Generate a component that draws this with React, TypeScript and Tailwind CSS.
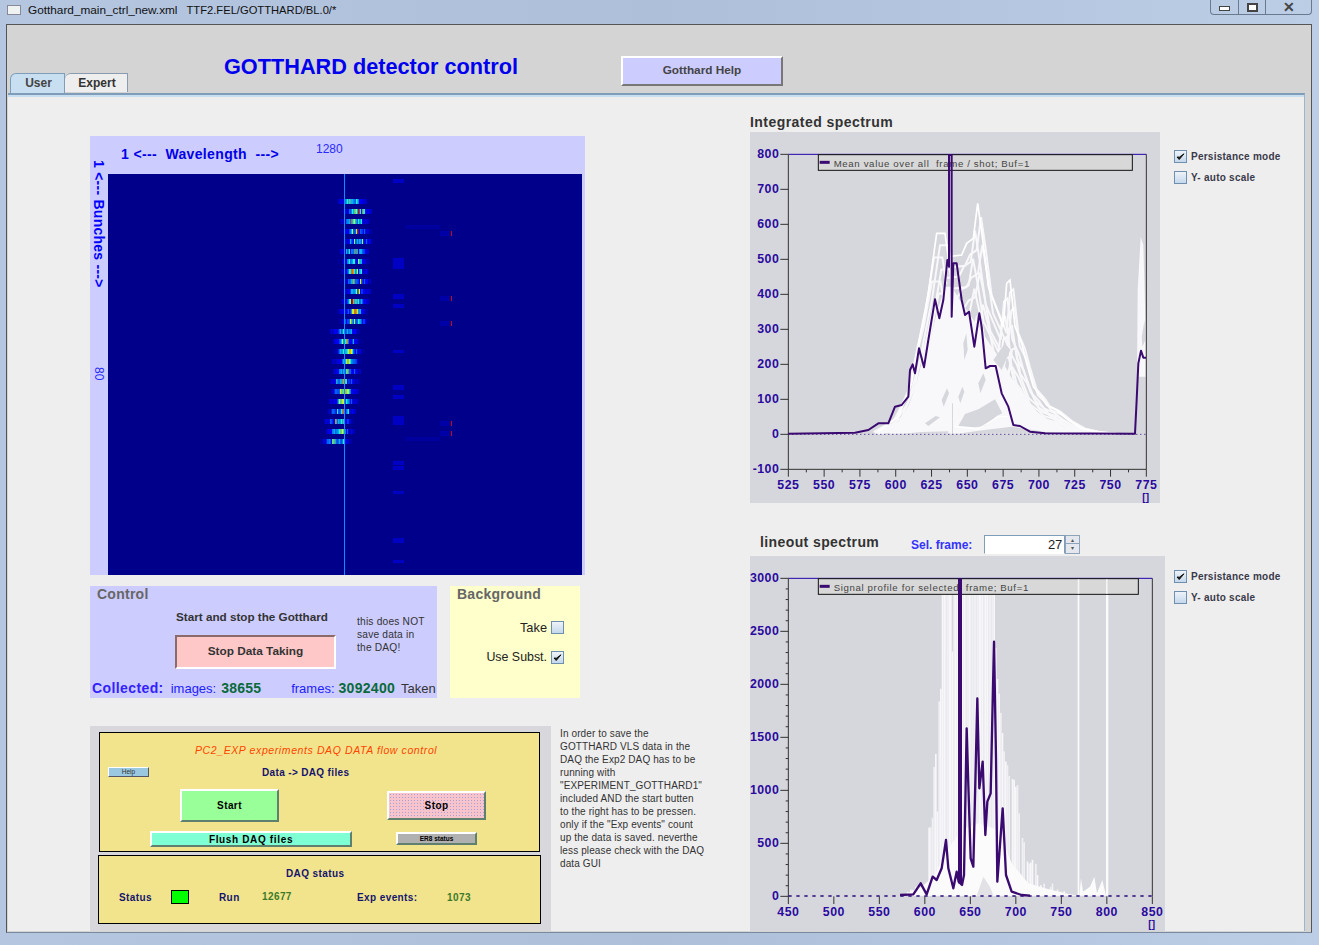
import React from "react";

const pts = (a: number[]) => a.join(" ");

// cheap seeded random so the detector image is the same every run
const makeRand = (seed: number) => () => {
  seed = (seed * 16807) % 2147483647;
  return seed / 2147483647;
};

const jet = (v: number) => {
  if (v < 0.16) return "#0000a8";
  if (v < 0.28) return "#0000d8";
  if (v < 0.42) return "#0000ff";
  if (v < 0.54) return "#0060ff";
  if (v < 0.66) return "#00b0ff";
  if (v < 0.76) return "#20f0e0";
  if (v < 0.86) return "#90ff70";
  if (v < 0.95) return "#f0f000";
  if (v < 0.99) return "#ff9000";
  return "#e80000";
};

const rowCentres = [352, 357, 354, 356, 358, 354, 354, 354, 356, 356, 354, 353, 354, 344, 346, 348, 346, 346, 343, 344, 343, 341, 338, 339, 336];

const Heatmap = () => {
  const rand = makeRand(4711);
  const cells: React.ReactNode[] = [];
  rowCentres.forEach((cx, r) => {
    const y = 199 + r * 10;
    for (let i = -24; i < 24; i++) {
      const d = i / 8;
      const v = Math.exp(-d * d) * (0.4 + rand() * 0.62);
      if (v < 0.1) continue;
      cells.push(<rect key={`${r}-${i}`} x={cx + i * 1.34 - 108} y={y - 174} width={1.4} height={5} fill={jet(v)} />);
    }
  });
  const blocks = [[179, 4], [258, 11], [294, 5], [304, 4], [350, 3], [385, 5], [395, 4], [416, 9], [461, 4], [466, 4], [491, 3], [538, 5], [560, 3]];
  const reds = [231, 296, 321, 421, 431];
  return (
    <svg width={474} height={401} className="block">
      <rect width={474} height={401} fill="#00008a" />
      {blocks.map(([y, h]) => (
        <rect key={y} x={285} y={y - 174} width={11} height={h} fill="#0000c4" />
      ))}
      <rect x={297} y={51} width={35} height={4} fill="#00009e" />
      <rect x={297} y={263} width={35} height={4} fill="#00009e" />
      {reds.map((y) => (
        <g key={y}>
          <rect x={332} y={y - 174} width={9} height={5} fill="#0000a8" />
          <rect x={343} y={y - 174} width={1} height={5} fill="#d00020" />
        </g>
      ))}
      {cells}
      <rect x={236} y={0} width={1} height={401} fill="#0a8cff" />
    </svg>
  );
};

const Checkbox = ({ checked }: { checked?: boolean }) => (
  <span className="flex h-[13px] w-[13px] shrink-0 items-center justify-center border border-[#6f8fae] bg-gradient-to-b from-[#eef3f8] to-[#c5d8ec]">
    {checked && (
      <svg width="11" height="11" viewBox="0 0 11 11">
        <path d="M2 6 L4.2 8.5 L9 2.8 L4.4 6.2 Z" fill="#111" stroke="#111" strokeWidth="1" />
      </svg>
    )}
  </span>
);

const PlotOption = ({ checked, label }: { checked?: boolean; label: string }) => (
  <div className="flex h-[21px] items-center gap-1">
    <Checkbox checked={checked} />
    <span className="text-[10px] font-bold tracking-[0.25px] text-[#3a3a4a]">{label}</span>
  </div>
);

const labelColor = "#2a0a9e";
const plotBg = "#d6d7dc";
const traceWhite = "#f8f8fa";

const envelopeA = [400, 905, 460, 860, 500, 760, 525, 620, 550, 490, 575, 310, 600, 310, 612, 400];
const envelopeB = [610, 380, 650, 375, 665, 340, 685, 325, 698, 220, 712, 320, 730, 470, 760, 550, 775, 590, 785, 460, 795, 450, 810, 590, 830, 640, 845, 700, 865, 770, 890, 800, 905, 825, 935, 840, 970, 870, 1010, 895, 1050, 905, 1100, 911];

// shrink a curve towards the baseline, this is what the persistance traces look like
const scaled = (a: number[], s: number, dx: number) => a.map((v, i) => (i % 2 === 0 ? v + dx : 912 - (912 - v) * s));

const IntegratedPlot = () => {
  const yLabels = [800, 700, 600, 500, 400, 300, 200, 100, 0, -100];
  const xLabels = [525, 550, 575, 600, 625, 650, 675, 700, 725, 750, 775];
  const traces = [
    [0.94, 10], [0.88, -8], [0.82, 14], [0.76, -14], [0.7, 6], [0.63, -10], [0.56, 16], [0.5, -4], [0.43, 8], [0.36, -8], [0.28, 4], [0.2, -2],
  ];
  return (
    <svg width={410} height={371} viewBox="15 6 1230 1113" className="block" style={{ background: plotBg }}>
      {traces.map(([s, dx]) => (
        <g key={s}>
          <polyline fill="none" stroke={traceWhite} strokeWidth="6" points={pts(scaled(envelopeA, s, dx))} />
          <polyline fill="none" stroke={traceWhite} strokeWidth="6" points={pts(scaled(envelopeB, s, dx))} />
        </g>
      ))}
      <polygon
        fill={traceWhite}
        points={pts([430, 911, 480, 860, 520, 745, 550, 650, 575, 550, 600, 470, 620, 470, 650, 520, 700, 590, 750, 665, 800, 745, 850, 815, 890, 860, 960, 892, 1040, 908, 1100, 911])}
      />
      <polygon fill={plotBg} points={pts([640, 888, 660, 852, 700, 838, 750, 808, 772, 850, 755, 858, 720, 888, 690, 892])} />
      <polygon fill={plotBg} points={pts([470, 911, 610, 911, 610, 904, 530, 906])} />
      <polygon fill={plotBg} points={pts([640, 911, 1000, 911, 900, 906, 800, 890, 700, 902])} />
      <polygon fill={plotBg} points={pts([590, 810, 606, 775, 612, 790, 596, 830])} />
      <polygon fill={plotBg} points={pts([540, 880, 572, 858, 585, 862, 550, 888])} />
      <polygon fill={plotBg} points={pts([655, 640, 664, 610, 668, 660, 658, 690])} />
      <polygon fill={plotBg} points={pts([745, 690, 780, 640, 796, 660, 770, 720])} />
      <polygon fill={plotBg} points={pts([700, 760, 715, 730, 722, 750, 706, 790])} />
      <polygon fill={plotBg} points={pts([640, 800, 652, 770, 658, 785, 646, 820])} />
      <polyline fill="none" stroke="#ffffff" strokeWidth="5" points={pts(envelopeA)} />
      <polyline fill="none" stroke="#ffffff" strokeWidth="5" points={pts(envelopeB)} />
      <polyline fill="none" stroke="#ffffff" strokeWidth="4" points={pts([630, 890, 700, 897, 760, 860, 790, 860])} />
      <rect x="621" y="820" width="3" height="92" fill={plotBg} />
      <polygon fill={traceWhite} points={pts([1176, 740, 1178, 480, 1187, 320, 1195, 345, 1201, 560, 1202, 740])} />
      <polygon fill={plotBg} points={pts([1190, 620, 1199, 570, 1201, 630, 1192, 650])} />

      <line x1="130" y1="73" x2="1204" y2="73" stroke="#2200aa" strokeWidth="3" />
      <line x1="130" y1="73" x2="130" y2="1018" stroke="#333" strokeWidth="3" />
      <line x1="1204" y1="73" x2="1204" y2="1018" stroke="#333" strokeWidth="3" />
      <line x1="130" y1="1018" x2="1204" y2="1018" stroke="#333" strokeWidth="3" />
      <line x1="130" y1="913" x2="1204" y2="913" stroke="#2a0a7e" strokeWidth="3" strokeDasharray="3 9" />
      {yLabels.map((l, i) => (
        <g key={l}>
          <line x1="106" x2="130" y1={73 + i * 105} y2={73 + i * 105} stroke="#333" strokeWidth="3" />
          <text x="103" y={73 + i * 105 + 12} textAnchor="end" fontSize="37" letterSpacing="1.5" fontWeight="700" fill={labelColor}>
            {l}
          </text>
        </g>
      ))}
      {xLabels.map((l, i) => (
        <g key={l}>
          <line x1={130 + i * 107.4} x2={130 + i * 107.4} y1="1018" y2="1040" stroke="#333" strokeWidth="3" />
          {i < 10 && <line x1={184 + i * 107.4} x2={184 + i * 107.4} y1="1018" y2="1027" stroke="#333" strokeWidth="3" />}
          <text x={130 + i * 107.4} y="1076" textAnchor="middle" fontSize="37" letterSpacing="1.5" fontWeight="700" fill={labelColor}>
            {l}
          </text>
        </g>
      ))}
      <text x="1202" y="1112" textAnchor="middle" fontSize="30" fontWeight="700" fill={labelColor}>
        []
      </text>

      <rect x="220" y="74" width="942" height="47" fill="#d8d8d8" stroke="#111" strokeWidth="3" />
      <line x1="224" y1="97" x2="254" y2="97" stroke="#3a0a70" strokeWidth="9" />
      <text x="266" y="110" fontSize="29" letterSpacing="1.9" fill="#444" style={{ whiteSpace: "pre" }}>
        Mean value over all  frame / shot; Buf=1
      </text>
      <polyline
        fill="none"
        stroke="#3a0a70"
        strokeWidth="6"
        strokeLinejoin="round"
        points={pts([130, 911, 330, 908, 370, 900, 400, 880, 430, 880, 450, 830, 470, 825, 490, 800, 495, 720, 503, 703, 510, 730, 522, 655, 537, 712, 550, 630, 570, 508, 583, 565, 595, 510, 607, 390, 612, 410, 612, 75, 620, 75, 620, 560, 625, 400, 635, 400, 650, 510, 660, 555, 672, 545, 688, 650, 703, 550, 710, 590, 722, 715, 735, 708, 752, 708, 770, 790, 790, 830, 805, 885, 825, 888, 855, 905, 900, 910, 1170, 911, 1175, 810, 1180, 700, 1188, 662, 1195, 683, 1203, 683])}
      />
    </svg>
  );
};

const lineoutEnvelope = [470, 1097, 500, 1070, 538, 1040, 545, 880, 560, 860, 565, 710, 585, 400, 590, 150, 745, 150, 752, 400, 770, 600, 790, 730, 815, 745, 825, 900, 850, 985, 868, 960, 882, 1040, 920, 1060, 960, 1085, 1000, 1097];

const envelopeAt = (x: number) => {
  for (let i = 0; i < lineoutEnvelope.length - 2; i += 2) {
    const [x0, y0, x1, y1] = lineoutEnvelope.slice(i, i + 4);
    if (x >= x0 && x <= x1) return y0 + ((y1 - y0) * (x - x0)) / (x1 - x0);
  }
  return 1097;
};

const LineoutPlot = () => {
  const yLabels = [3000, 2500, 2000, 1500, 1000, 500, 0];
  const xLabels = [450, 500, 550, 600, 650, 700, 750, 800, 850];
  const rand = makeRand(991);
  const bars: React.ReactNode[] = [];
  for (let x = 470; x < 1000; x += 5) {
    const drop = rand() < 0.18 ? rand() * 380 : rand() * 40;
    const top = Math.min(envelopeAt(x) + drop, 1097);
    bars.push(<rect key={x} x={x} y={top} width={5} height={1097 - top} fill={rand() < 0.5 ? "#f0f0f3" : "#f7f7f9"} />);
  }
  return (
    <svg width={415} height={376} viewBox="15 78 1245 1128" className="block" style={{ background: plotBg }}>
      {bars}
      <polygon
        fill="#fbfbfc"
        points={pts([470, 1097, 530, 1070, 570, 1035, 600, 970, 650, 900, 700, 880, 760, 900, 800, 1000, 850, 1060, 900, 1075, 960, 1090, 1000, 1097])}
      />
      <polygon fill="#e2e2e6" points={pts([695, 1097, 715, 1040, 735, 1070, 745, 1097])} />
      <rect x="998" y="145" width="5" height="952" fill="#fbfbfc" />
      <rect x="1083" y="145" width="7" height="952" fill="#fbfbfc" />
      <polygon fill="#fbfbfc" points={pts([1003, 1097, 1008, 1045, 1014, 1085, 1035, 1070, 1048, 1040, 1056, 1090, 1072, 1050, 1083, 1097])} />

      <line x1="130" y1="145" x2="1222" y2="145" stroke="#2200aa" strokeWidth="3" />
      <line x1="130" y1="145" x2="130" y2="1099" stroke="#333" strokeWidth="3" />
      <line x1="1222" y1="145" x2="1222" y2="1099" stroke="#333" strokeWidth="3" />
      {yLabels.map((l, i) => (
        <g key={l}>
          <line x1="106" x2="130" y1={145 + i * 159} y2={145 + i * 159} stroke="#333" strokeWidth="3" />
          {i < 6 &&
            [1, 2, 3, 4].map((k) => (
              <line key={k} x1="122" x2="130" y1={145 + i * 159 + k * 31.8} y2={145 + i * 159 + k * 31.8} stroke="#333" strokeWidth="3" />
            ))}
          <text x="103" y={145 + i * 159 + 12} textAnchor="end" fontSize="37" letterSpacing="1.5" fontWeight="700" fill={labelColor}>
            {l}
          </text>
        </g>
      ))}
      {xLabels.map((l, i) => (
        <g key={l}>
          <line x1={130 + i * 136.5} x2={130 + i * 136.5} y1="1099" y2="1122" stroke="#333" strokeWidth="3" />
          <text x={130 + i * 136.5} y="1157" textAnchor="middle" fontSize="37" letterSpacing="1.5" fontWeight="700" fill={labelColor}>
            {l}
          </text>
        </g>
      ))}
      <text x="1220" y="1194" textAnchor="middle" fontSize="30" fontWeight="700" fill={labelColor}>
        []
      </text>

      <rect x="220" y="146" width="960" height="47" fill="#d8d8d8" stroke="#111" strokeWidth="3" />
      <rect x="998" y="148" width="5" height="43" fill="#f4f4f4" />
      <rect x="1083" y="148" width="5" height="43" fill="#f4f4f4" />
      <line x1="224" y1="169" x2="254" y2="169" stroke="#3a0a70" strokeWidth="9" />
      <text x="266" y="182" fontSize="29" letterSpacing="1.9" fill="#444" style={{ whiteSpace: "pre" }}>
        Signal profile for selected  frame; Buf=1
      </text>
      <line x1="130" y1="1098" x2="1222" y2="1098" stroke="#2a0a7e" strokeWidth="4" strokeDasharray="10 14" />
      <rect x="639" y="145" width="12" height="915" fill="#3a0a70" />
      <polyline
        fill="none"
        stroke="#3a0a70"
        strokeWidth="7"
        strokeLinejoin="round"
        points={pts([465, 1095, 505, 1093, 527, 1060, 545, 1093, 563, 1040, 575, 1050, 590, 1015, 603, 930, 610, 1015, 625, 1075, 635, 1025, 641, 1055, 651, 1065, 657, 1035, 665, 595, 670, 765, 677, 985, 685, 1010, 697, 505, 703, 775, 713, 695, 721, 915, 727, 815, 737, 790, 747, 335, 753, 685, 757, 1055, 773, 835, 783, 1035, 800, 1085, 830, 1095, 855, 1097])}
      />
    </svg>
  );
};

const FlatButton = ({ className, children }: { className: string; children: React.ReactNode }) => (
  <div className={`flex items-center justify-center border-t-2 border-l-2 border-r-2 border-b-2 border-t-white border-l-white border-r-[#5f7f6f] border-b-[#5f7f6f] font-bold text-black ${className}`}>
    {children}
  </div>
);

const noteLines = [
  "In order to save the",
  "GOTTHARD VLS data in the",
  "DAQ the Exp2 DAQ has to be",
  "running with",
  '"EXPERIMENT_GOTTHARD1"',
  "included AND the start butten",
  "to the right has to be pressen.",
  'only if the "Exp events" count',
  "up the data is saved. neverthe",
  "less please check with the DAQ",
  "data GUI",
];

const LeftColumn = () => (
  <div className="ml-[82px] w-[640px] shrink-0 pt-[41px]">
    <div className="flex h-[439px] w-[495px] bg-[#ccccff]">
      <div className="flex w-[18px] shrink-0 flex-col items-center pt-[24px] text-[#0000ff]">
        <span className="whitespace-pre text-[14px] font-bold leading-[18px] tracking-[0.25px] [writing-mode:vertical-rl]">{"1 <--- Bunches --->"}</span>
        <span className="mt-[79px] text-[12px] font-medium leading-[18px] text-[#2a2aff] [writing-mode:vertical-rl]">80</span>
      </div>
      <div>
        <div className="flex h-[38px]">
          <span className="ml-[13px] mt-[9px] whitespace-pre text-[14px] font-bold leading-[18px] tracking-[0.35px] text-[#0000e8]">{"1 <---  Wavelength  --->"}</span>
          <span className="ml-[37px] mt-[6px] text-[12px] leading-[14px] text-[#2a2aff]">1280</span>
        </div>
        <Heatmap />
      </div>
    </div>

    <div className="mt-[11px] flex h-[112px] gap-[13px]">
      <div className="flex w-[347px] flex-col bg-[#ccccff]">
        <div className="ml-[7px] h-[17px] text-[14px] font-bold leading-[17px] tracking-[0.25px] text-[#666]">Control</div>
        <div className="flex">
          <div className="ml-[85px] w-[161px]">
            <div className="ml-px mt-[6px] whitespace-nowrap text-[11.7px] font-bold leading-[16px] text-[#333]">Start and stop the Gotthard</div>
            <div className="mt-[10px] flex h-[34px] items-center justify-center border-2 border-t-[#8a6a6a] border-l-[#8a6a6a] border-r-white border-b-white bg-[#ffc8c8] text-[11.8px] font-bold text-[#333]">
              Stop Data Taking
            </div>
          </div>
          <div className="ml-[21px] mt-[12px] text-[10.2px] leading-[13px] tracking-[0.2px] text-[#333]">
            <div>this does NOT</div>
            <div>save data in</div>
            <div>the DAQ!</div>
          </div>
        </div>
        <div className="ml-[2px] mt-[9px] flex items-baseline whitespace-nowrap">
          <span className="text-[14px] font-bold tracking-[0.4px] text-[#3322ff]">Collected:</span>
          <span className="ml-[7px] text-[13px] text-[#2222ff]">images:</span>
          <span className="ml-[5px] text-[14px] font-bold tracking-[0.2px] text-[#0a6a3a]">38655</span>
          <span className="ml-[30px] text-[13px] text-[#2222ff]">frames:</span>
          <span className="ml-[4px] text-[14px] font-bold tracking-[0.3px] text-[#0a6a3a]">3092400</span>
          <span className="ml-[6px] text-[13px] font-medium text-[#333]">Taken</span>
        </div>
      </div>
      <div className="w-[130px] bg-[#ffffcc]">
        <div className="ml-[7px] h-[17px] text-[14px] font-bold leading-[17px] tracking-[0.25px] text-[#666]">Background</div>
        <div className="mr-[16px] mt-[18px] flex h-[13px] items-center justify-end gap-[4px] text-[12.8px] text-[#222]">
          Take <Checkbox />
        </div>
        <div className="mr-[16px] mt-[17px] flex h-[13px] items-center justify-end gap-[4px] text-[12.4px] text-[#222]">
          Use Subst. <Checkbox checked />
        </div>
      </div>
    </div>

    <div className="mt-[28px] flex">
      <div className="h-[206px] w-[461px] bg-[#d8d8dc] pl-[8px] pt-[6px]">
        <div className="ml-px h-[120px] w-[441px] border border-black bg-[#f2e48c]">
          <div className="ml-[95px] mt-[11px] text-[10.5px] italic leading-[13px] tracking-[0.6px] text-[#ff4500]">PC2_EXP experiments DAQ DATA flow control</div>
          <div className="mt-[9px] flex h-[12px] items-center">
            <div className="ml-[8px] flex h-[10px] w-[41px] items-center justify-center border border-b-[#556] border-r-[#556] border-l-white border-t-white bg-[#9ac8e0] text-[6.5px] text-[#333]">Help</div>
            <div className="ml-[113px] text-[10px] font-bold tracking-[0.35px] text-[#15156e]">{"Data -> DAQ files"}</div>
          </div>
          <div className="mt-[11px] flex items-start">
            <FlatButton className="ml-[80px] h-[33px] w-[99px] bg-[#99ff99] text-[10px] tracking-[0.4px]">Start</FlatButton>
            <FlatButton className="ml-[108px] mt-[2px] h-[29px] w-[99px] bg-[#f8c4cc] bg-[radial-gradient(circle,#a8a0d8_0.6px,transparent_0.9px)] bg-[length:3px_3px] text-[10px] tracking-[0.4px]">Stop</FlatButton>
          </div>
          <div className="mt-[9px] flex items-start">
            <FlatButton className="ml-[50px] h-[16px] w-[202px] bg-[#7fffd4] text-[10px] tracking-[0.65px]">Flush DAQ files</FlatButton>
            <FlatButton className="ml-[44px] mt-px h-[13px] w-[81px] bg-[#b0b0b0] text-[6.5px]">ER8 status</FlatButton>
          </div>
        </div>
        <div className="mt-[3px] h-[69px] w-[443px] border border-black bg-[#f2e48c]">
          <div className="ml-[187px] mt-[11px] text-[10px] font-bold leading-[13px] tracking-[0.4px] text-[#15156e]">DAQ status</div>
          <div className="mt-[10px] flex h-[14px] items-center text-[10px] font-bold tracking-[0.4px] text-[#15156e]">
            <span className="ml-[20px] w-[52px]">Status</span>
            <span className="h-[14px] w-[18px] border border-black bg-[#00ff00]" />
            <span className="ml-[30px] w-[43px]">Run</span>
            <span className="-mt-[2px] w-[95px] text-[#3c7a2a]">12677</span>
            <span className="w-[90px]">Exp events:</span>
            <span className="text-[#3c7a2a]">1073</span>
          </div>
        </div>
      </div>
      <div className="ml-[9px] whitespace-nowrap pt-px text-[10px] leading-[13px] tracking-[0.12px] text-[#333]">
        {noteLines.map((line) => (
          <div key={line}>{line}</div>
        ))}
      </div>
    </div>
  </div>
);

const RightColumn = () => (
  <div className="ml-[20px]">
    <div className="mt-[18px] h-[19px] text-[14px] font-bold leading-[19px] tracking-[0.45px] text-[#333]">Integrated spectrum</div>
    <div className="flex">
      <IntegratedPlot />
      <div className="ml-[14px] pt-[14px]">
        <PlotOption checked label="Persistance mode" />
        <PlotOption label="Y- auto scale" />
      </div>
    </div>
    <div className="mt-[30px] flex h-[23px] items-center">
      <span className="mb-[4px] ml-[10px] w-[151px] text-[14px] font-bold tracking-[0.4px] text-[#333]">lineout spectrum</span>
      <span className="text-[12px] font-bold text-[#3333ff]">Sel. frame:</span>
      <div className="ml-[12px] flex h-[19px] w-[96px]">
        <div className="flex-1 border border-b-white border-[#7f9db9] bg-white pr-[2px] text-right text-[13px] font-medium leading-[17px] text-[#222]">27</div>
        <div className="flex w-[15px] flex-col border border-[#8ea4ba] bg-[#e4e8ee] text-center text-[6px] leading-[8px] text-[#555]">
          <span className="h-[8px] border-b border-[#8ea4ba]">▴</span>
          <span>▾</span>
        </div>
      </div>
    </div>
    <div className="flex">
      <LineoutPlot />
      <div className="ml-[9px] pt-[10px]">
        <PlotOption checked label="Persistance mode" />
        <PlotOption label="Y- auto scale" />
      </div>
    </div>
  </div>
);

export default function App() {
  return (
    <div className="h-[945px] w-[1319px] overflow-hidden bg-gradient-to-r from-[#b4c6e0] via-[#aebfda] to-[#bccde6] font-['Liberation_Sans',Arial,sans-serif]">
      <div className="flex h-[24px]">
        <div className="ml-[7px] mt-[5px] h-[10px] w-[14px] border border-[#889] bg-[#eef2f0]" />
        <div className="ml-[7px] whitespace-pre pt-[1px] text-[11.8px] leading-[18px] text-[#111]">Gotthard_main_ctrl_new.xml</div>
        <div className="ml-[9px] whitespace-pre pt-[1px] text-[11.2px] leading-[18px] text-[#111]">TTF2.FEL/GOTTHARD/BL.0/*</div>
        <div className="ml-auto mr-[7px] flex h-[15px] w-[102px] rounded-b-[4px] border border-t-0 border-[#6a7a8e] text-[#333]">
          <div className="flex w-[28px] items-center justify-center border-r border-[#6a7a8e]">
            <span className="mt-[3px] h-[5px] w-[11px] border border-[#444] bg-white" />
          </div>
          <div className="flex w-[27px] items-center justify-center border-r border-[#6a7a8e]">
            <span className="h-[9px] w-[11px] border-2 border-[#444] bg-white" />
          </div>
          <div className="flex flex-1 items-center justify-center text-[14px] font-bold leading-[12px] text-[#444]">✕</div>
        </div>
      </div>
      <div className="ml-[6px] h-[909px] w-[1306px] border border-[#555] border-b-[#7a8a9e] bg-[#d4d4d4] pr-[6px]">
        <div className="flex h-[68px] items-end">
          <div className="ml-[3px] flex">
            <div className="flex h-[20px] w-[55px] items-center justify-center rounded-tl-[6px] border border-b-0 border-[#7f9db9] bg-[#c8dff2] pb-px pl-[2px] text-[12px] font-bold text-[#444]">User</div>
            <div className="flex h-[19px] w-[63px] items-center justify-center rounded-tl-[6px] border border-b-0 border-l-0 border-[#8a9bb0] bg-[#eeeeee] pl-[2px] text-[12px] font-bold text-[#333]">Expert</div>
          </div>
          <div className="mb-[13px] ml-[96px] w-[397px] whitespace-nowrap text-[21.7px] font-bold leading-[26px] text-[#0000ee]">GOTTHARD detector control</div>
          <div className="mb-[7px] flex h-[30px] w-[162px] items-center justify-center border-2 border-b-[#777] border-r-[#777] border-l-white border-t-white bg-[#ccccff] text-[11.8px] font-bold text-[#444]">Gotthard Help</div>
        </div>
        <div className="ml-px flex h-[838px] w-[1297px] overflow-hidden border-t-[2px] border-r border-t-[#7f9db9] border-r-[#9db6d0] bg-[#eeeeee] shadow-[inset_0_2px_0_#c8dff2]">
          <LeftColumn />
          <RightColumn />
        </div>
      </div>
    </div>
  );
}
